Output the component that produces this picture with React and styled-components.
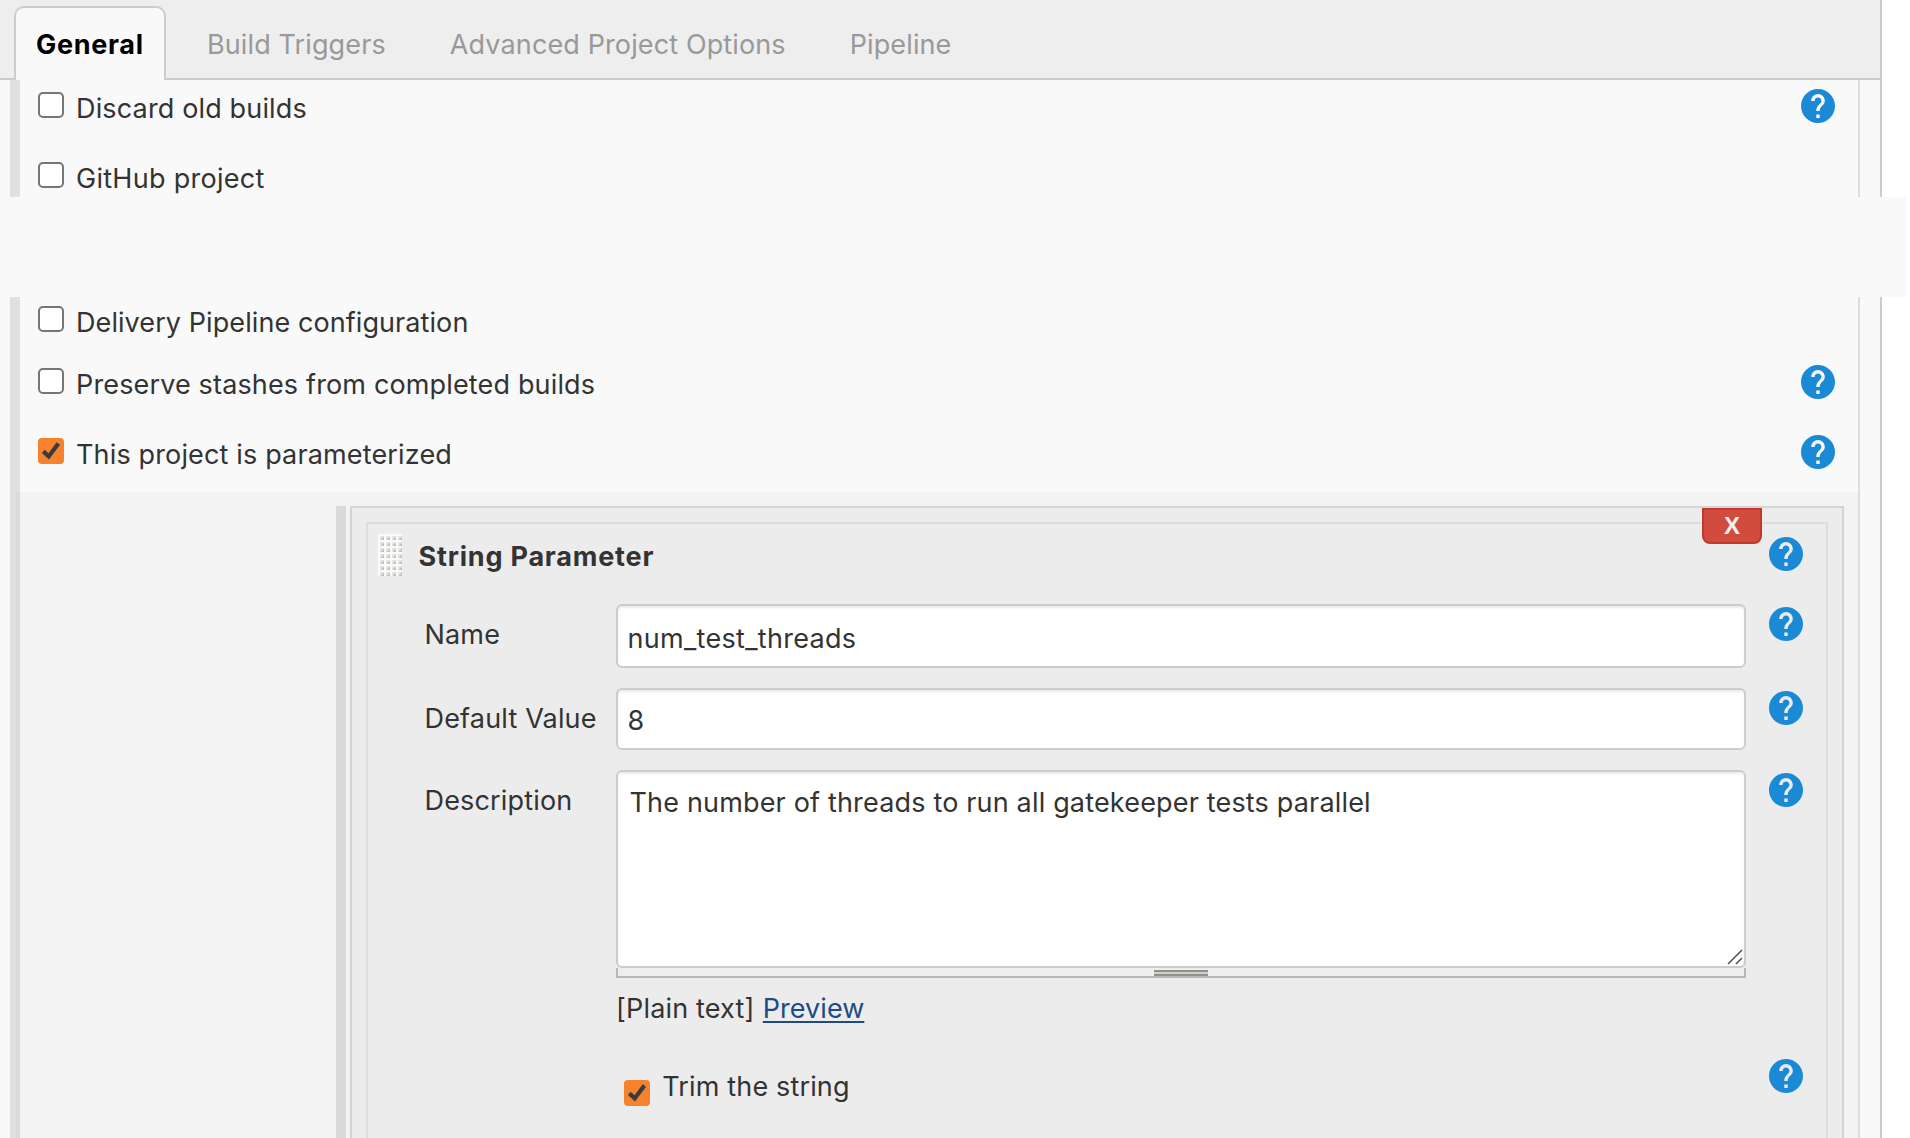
import React from "react";
import styled, { createGlobalStyle, css } from "styled-components";

const GlobalStyle = createGlobalStyle`
  *, *::before, *::after { box-sizing: border-box; }
  body {
    margin: 0;
    background: #fff;
    overflow: hidden;
  }
`;

const type = css`
  font-family: Inter, "Liberation Sans", sans-serif;
  font-size: 27px;
  line-height: 32px;
  letter-spacing: 0.17px;
  color: #333;
`;

const Page = styled.div`
  ${type}
  display: flex;
  flex-direction: column;
  width: 1910px;
  height: 1138px;
  overflow: hidden;
`;

const TabBar = styled.nav`
  display: flex;
  align-items: flex-end;
  flex: none;
  width: 1882px;
  height: 80px;
  padding-left: 14px;
  background: linear-gradient(#ccc, #ccc) 0 78px / 100% 2px no-repeat #eee;
  border-right: 2px solid #ccc;
`;

const Tab = styled.a`
  height: 74px;
  padding: 23px ${(p) => p.$right}px 0 ${(p) => p.$left}px;
  color: #999;
  letter-spacing: 0.12px;
  white-space: nowrap;
  ${(p) =>
    p.$active &&
    css`
      width: 152px;
      padding: 21px 0 0 20px;
      border: 2px solid #ccc;
      border-bottom: 0;
      border-radius: 10px 10px 0 0;
      background: #f9f9f9;
      color: #000;
      font-weight: 700;
      letter-spacing: 0.7px;
    `}
`;

const Segment = styled.section`
  display: flex;
  flex: ${(p) => (p.$height ? "none" : 1)};
  width: 1882px;
  height: ${(p) => (p.$height ? `${p.$height}px` : "auto")};
  min-height: 0;
  padding: 0 20px 0 10px;
  background: #f9f9f9;
  border-right: 2px solid #ccc;
`;

const SegmentBody = styled.div`
  display: flex;
  flex-direction: column;
  flex: 1;
  padding-top: ${(p) => p.$top}px;
  border-left: 10px solid #e0e0e0;
  border-right: 2px solid #ddd;
`;

const Gap = styled.div`
  flex: none;
  width: 1905.5px;
  height: 100px;
  background: #f9f9f9;
`;

const OptionRow = styled.div`
  display: flex;
  align-items: flex-start;
  flex: none;
  height: ${(p) => p.$height}px;
  padding: 0 23px 0 18px;
`;

const OptionLabel = styled.label`
  flex: 1;
  padding: ${(p) => p.$top ?? 4}px 0 0 ${(p) => p.$left ?? 12}px;
  letter-spacing: ${(p) => p.$spacing ?? 0.15}px;
`;

const Box = styled.span`
  display: flex;
  flex: none;
  width: 26px;
  height: 26px;
  margin-top: ${(p) => p.$top ?? 3}px;
  border: ${(p) => (p.$checked ? "0" : "2px solid #767676")};
  border-radius: ${(p) => (p.$checked ? 4 : 5)}px;
  background: ${(p) => (p.$checked ? "#f6822d" : "#fff")};
`;

const HelpSvg = styled.svg`
  display: block;
  flex: none;
  width: 34px;
  height: 34px;
  margin-top: ${(p) => p.$top ?? 0}px;
  fill: #1a8ad6;
`;

const Nested = styled.div`
  display: flex;
  gap: 4px;
  flex: 1;
  min-height: 0;
  margin-left: -4px;
  padding: 14px 14px 0 320px;
  background: rgba(0, 0, 0, 0.024);
`;

const NestedBar = styled.div`
  flex: none;
  width: 10px;
  background: #dadada;
`;

const OuterPanel = styled.div`
  position: relative;
  display: flex;
  flex: 1;
  padding: 14px 14px 0;
  border: 2px solid #d4d4d4;
  border-bottom: 0;
  background: #ececec;
`;

const InnerPanel = styled.div`
  flex: 1;
  padding: 10px 23px 0 10px;
  border: 2px solid #ddd;
  border-bottom: 0;
`;

const DeleteButton = styled.button`
  position: absolute;
  top: 0;
  right: 80px;
  width: 60px;
  height: 36px;
  padding: 0;
  border: 2px solid #c0392b;
  border-radius: 0 0 8px 8px;
  background: #d24b3f;
  color: #f0f0f0;
  font: bold 24px/32px "Liberation Sans", Arial, sans-serif;
`;

const PanelHeader = styled.header`
  display: flex;
  align-items: flex-start;
  height: 70px;
`;

const PanelTitle = styled.h3`
  flex: 1;
  margin: 0;
  padding: 7px 0 0 16.5px;
  font: inherit;
  font-weight: 700;
  letter-spacing: 0.8px;
`;

const FieldRow = styled.div`
  display: grid;
  grid-template-columns: 169px 1fr 34px;
  column-gap: 23px;
  align-items: start;
  height: ${(p) => p.$height}px;
  margin-left: 46px;
`;

const FieldLabel = styled.label`
  padding: 15px 0 0 0.5px;
  margin-right: -23px;
  white-space: nowrap;
`;

const control = css`
  ${type}
  display: block;
  width: 100%;
  margin: 0;
  border: 2px solid #ccc;
  border-radius: 6px;
  outline: 0;
  background: #fff;
  box-shadow: inset 0 2px 2px rgba(0, 0, 0, 0.075);
`;

const TextInput = styled.input`
  ${control}
  height: ${(p) => p.$height}px;
  padding: ${(p) => p.$top ?? 2}px 9.5px 0;
  letter-spacing: ${(p) => p.$spacing ?? 0.17}px;
`;

const TextArea = styled.textarea`
  ${control}
  height: 198px;
  padding: 15px 11.5px 0;
  resize: none;
`;

const AreaWrap = styled.div`
  position: relative;
`;

const Resizer = styled.svg`
  position: absolute;
  right: 3px;
  bottom: 3px;
  width: 16px;
  height: 16px;
  stroke: #555;
  stroke-width: 1.6;
`;

const DragStrip = styled.div`
  display: flex;
  justify-content: center;
  height: 10px;
  padding-top: 2px;
  border: 2px solid #b8b9b3;
  border-top: 0;
  background: #eee;
`;

const StripGrip = styled.span`
  width: 54px;
  height: 6px;
  border: solid #8f918a;
  border-width: 2px 0;
  background: #cfd1ca;
`;

const Hint = styled.div`
  display: flex;
  gap: 8.2px;
  padding-top: 15px;
`;

const PreviewLink = styled.a`
  color: #204a87;
  letter-spacing: 0.05px;
  text-decoration: underline;
  text-decoration-thickness: 2px;
  text-underline-offset: 3px;
`;

const TrimRow = styled.div`
  display: flex;
  align-items: flex-start;
  padding-left: 246px;
`;

const GripSvg = styled.svg`
  display: block;
  flex: none;
  width: 24px;
  height: 42px;
`;

function Help({ top }) {
  return (
    <HelpSvg viewBox="2 2 20 20" $top={top}>
      <path d="M12 2C6.48 2 2 6.48 2 12s4.48 10 10 10 10-4.48 10-10S17.52 2 12 2zm1 17h-2v-2h2v2zm2.07-7.75l-.9.92C13.45 12.9 13 13.5 13 15h-2v-.5c0-1.1.45-2.1 1.17-2.83l1.24-1.26c.37-.36.59-.86.59-1.41 0-1.1-.9-2-2-2s-2 .9-2 2H8c0-2.21 1.79-4 4-4s4 1.79 4 4c0 .88-.36 1.68-.93 2.25z" />
    </HelpSvg>
  );
}

function Checkbox({ checked, top }) {
  return (
    <Box $checked={checked} $top={top} role="checkbox" aria-checked={!!checked}>
      {checked && (
        <svg width="26" height="26" viewBox="0 0 26 26" fill="none" stroke="#3b3b3b" strokeWidth="4.2">
          <path d="M5.3 13.4 L10.7 18.4 L20.4 5.4" />
        </svg>
      )}
    </Box>
  );
}

function Grip() {
  return (
    <GripSvg viewBox="0 0 24 42">
      <defs>
        <pattern id="grip" width="6" height="6" patternUnits="userSpaceOnUse">
          <rect width="6" height="6" fill="#fafaf9" />
          <rect x="2" y="2" width="4" height="4" fill="#e4e4e1" />
          <path d="M6 2.6V6H2.6Z" fill="#c2c2be" />
        </pattern>
      </defs>
      <rect width="24" height="42" fill="url(#grip)" />
    </GripSvg>
  );
}

function Option({ label, height, checked, help, spacing }) {
  return (
    <OptionRow $height={height}>
      <Checkbox checked={checked} />
      <OptionLabel $spacing={spacing}>{label}</OptionLabel>
      {help && <Help />}
    </OptionRow>
  );
}

export default function App() {
  return (
    <Page>
      <GlobalStyle />
      <TabBar>
        <Tab $active>General</Tab>
        <Tab $left={41} $right={32}>Build Triggers</Tab>
        <Tab $left={32} $right={32}>Advanced Project Options</Tab>
        <Tab $left={32} $right={32}>Pipeline</Tab>
      </TabBar>
      <Segment $height={117}>
        <SegmentBody $top={9}>
          <Option label="Discard old builds" height={70} help />
          <Option label="GitHub project" height={34} spacing={0.28} />
        </SegmentBody>
      </Segment>
      <Gap />
      <Segment>
        <SegmentBody $top={6}>
          <Option label="Delivery Pipeline configuration" height={62} spacing={0.08} />
          <Option label="Preserve stashes from completed builds" height={70} help />
          <Option label="This project is parameterized" height={57} checked help />
          <Nested>
            <NestedBar />
            <OuterPanel>
              <InnerPanel>
                <PanelHeader>
                  <Grip />
                  <PanelTitle>String Parameter</PanelTitle>
                  <Help top={3} />
                </PanelHeader>
                <FieldRow $height={84}>
                  <FieldLabel>Name</FieldLabel>
                  <TextInput $height={64} $top={4} $spacing={0.3} defaultValue="num_test_threads" spellCheck={false} />
                  <Help top={3} />
                </FieldRow>
                <FieldRow $height={82}>
                  <FieldLabel>Default Value</FieldLabel>
                  <TextInput $height={62} defaultValue="8" />
                  <Help top={3} />
                </FieldRow>
                <FieldRow $height={289}>
                  <FieldLabel>Description</FieldLabel>
                  <div>
                    <AreaWrap>
                      <TextArea
                        spellCheck={false}
                        defaultValue="The number of threads to run all gatekeeper tests parallel"
                      />
                      <Resizer viewBox="0 0 16 16">
                        <path d="M1 15L15 1M9 15L15 9" />
                      </Resizer>
                    </AreaWrap>
                    <DragStrip>
                      <StripGrip />
                    </DragStrip>
                    <Hint>
                      <span>[Plain text]</span>
                      <PreviewLink>Preview</PreviewLink>
                    </Hint>
                  </div>
                  <Help top={3} />
                </FieldRow>
                <TrimRow>
                  <Checkbox checked top={21} />
                  <OptionLabel $top={12} $left={12.3}>Trim the string</OptionLabel>
                  <Help />
                </TrimRow>
              </InnerPanel>
              <DeleteButton>X</DeleteButton>
            </OuterPanel>
          </Nested>
        </SegmentBody>
      </Segment>
    </Page>
  );
}
